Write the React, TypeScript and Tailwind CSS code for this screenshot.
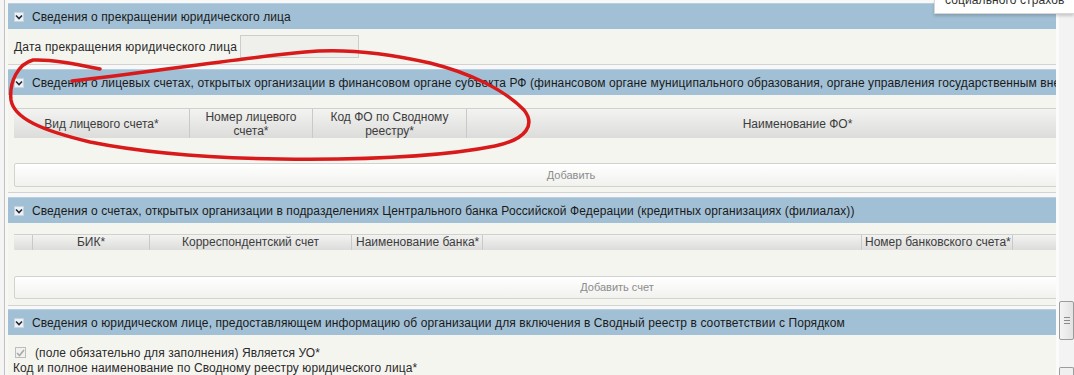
import React from "react";

const Chev = () => (
  <span className="w-[10px] h-[10px] bg-[#eef2f6] border border-[#c7d3de] flex items-center justify-center shrink-0">
    <svg width="8" height="6" viewBox="0 0 8 6">
      <path d="M1 1.5 L4 4.5 L7 1.5" fill="none" stroke="#1e2a36" strokeWidth="1.6" />
    </svg>
  </span>
);

const Header = ({ text }: { text: string }) => (
  <div className="h-[26px] bg-[#a2c0d5] flex items-center pl-[6px] whitespace-nowrap overflow-hidden text-[#1a1a1a] border-t border-[#b8cfdf]">
    <Chev />
    <span className="ml-[8px]">{text}</span>
  </div>
);

const Btn = ({ text, w }: { text: string; w: string }) => (
  <div
    className={`${w} ml-[6px] border border-[#d2d2d2] rounded-[2px] bg-gradient-to-b from-white to-[#f1f1ee] flex items-center justify-center text-[#8c8c8c] text-[11px] tracking-normal`}
  >
    {text}
  </div>
);

export default function App() {
  return (
    <div className="relative w-[1074px] h-[375px] overflow-hidden bg-[#f8f8f8] font-['Liberation_Sans',Arial,sans-serif] text-[12px] tracking-[0.1px]">
      <div className="flex h-full">
        <div className="w-[4px] bg-[#f4f4f4]" />
        <div className="w-px bg-[#c2c2c2]" />
        <div className="w-[3px] bg-[#f7f7f4]" />
        <div className="w-[1049px] overflow-hidden pt-[3px] flex flex-col">
          {/* Section 1 */}
          <Header text="Сведения о прекращении юридического лица" />
          <div className="h-[36px] bg-[#f5f5f0] border-b border-[#d3d3d3] flex items-center pl-[6px] text-[#2a2a2a] tracking-[0.2px]">
            <span>Дата прекращения юридического лица</span>
            <div className="ml-[3px] w-[119px] h-[23px] bg-[#efefec] border border-[#cdcdcd]" />
          </div>
          <div className="h-[4px]" />

          {/* Section 2 */}
          <Header text="Сведения о лицевых счетах, открытых организации в финансовом органе субъекта РФ (финансовом органе муниципального образования, органе управления государственным внебюджетным фондом)" />
          <div className="bg-[#f5f5f0] border-b border-[#d3d3d3] pt-[13px] pb-[5px]">
            <div className="ml-[6px] w-[1114px] h-[30px] flex bg-gradient-to-b from-[#f3f3f1] to-[#dcdcda] border-t border-[#d0d0d0] text-[#3c3c3c] leading-[14px] tracking-normal">
              <div className="w-[176px] border-r border-[#c9c9c9] flex items-center justify-center">Вид лицевого счета*</div>
              <div className="w-[123px] border-r border-[#c9c9c9] flex items-center justify-center text-center">Номер лицевого<br />счета*</div>
              <div className="w-[154px] border-r border-[#c9c9c9] flex items-center justify-center text-center">Код ФО по Сводному<br />реестру*</div>
              <div className="flex-1 flex items-center justify-center">Наименование ФО*</div>
            </div>
            <div className="h-[25px]" />
            <Btn text="Добавить" w="w-[1114px] h-[24px]" />
          </div>
          <div className="h-[4px]" />

          {/* Section 3 */}
          <Header text="Сведения о счетах, открытых организации в подразделениях Центрального банка Российской Федерации (кредитных организациях (филиалах))" />
          <div className="bg-[#f5f5f0] border-b border-[#d3d3d3] pt-[11px] pb-[6px]">
            <div className="ml-[6px] w-[1206px] h-[16px] flex bg-gradient-to-b from-[#f3f3f1] to-[#dcdcda] border-t border-[#d0d0d0] text-[#3c3c3c] leading-[15px] tracking-normal">
              <div className="w-[19px] border-r border-[#c9c9c9]" />
              <div className="w-[117px] border-r border-[#c9c9c9] text-center">БИК*</div>
              <div className="w-[202px] border-r border-[#c9c9c9] text-center">Корреспондентский счет</div>
              <div className="w-[131px] border-r border-[#c9c9c9] pl-[4px] whitespace-nowrap overflow-hidden">Наименование банка*</div>
              <div className="w-[379px] border-r border-[#c9c9c9]" />
              <div className="w-[151px] border-r border-[#c9c9c9] pl-[3px] whitespace-nowrap overflow-hidden">Номер банковского счета*</div>
              <div className="flex-1" />
            </div>
            <div className="h-[26px]" />
            <Btn text="Добавить счет" w="w-[1206px] h-[23px]" />
          </div>
          <div className="h-[3px]" />

          {/* Section 4 */}
          <Header text="Сведения о юридическом лице, предоставляющем информацию об организации для включения в Сводный реестр в соответствии с Порядком" />
          <div className="flex-1 bg-[#f5f5f0] pt-[10px] text-[#2a2a2a]">
            <div className="flex items-center h-[15px] pl-[7px]">
              <span className="w-[11px] h-[11px] border border-[#bdbdbd] bg-[#f1f1ef] flex items-center justify-center">
                <svg width="9" height="8" viewBox="0 0 9 8">
                  <path d="M1 4 L3.5 6.5 L8 1" fill="none" stroke="#a9a9a9" strokeWidth="1.6" />
                </svg>
              </span>
              <span className="ml-[9px]">(поле обязательно для заполнения) Является УО*</span>
            </div>
            <div className="h-[15px] flex items-center pl-[5px]">Код и полное наименование по Сводному реестру юридического лица*</div>
          </div>
        </div>
        {/* right strip with scrollbar */}
        <div className="flex-1 bg-[#f3f3f3] border-l-[3px] border-[#fbfbfb] flex flex-col items-center">
          <div className="h-[301px]" />
          <div className="w-[15px] h-[39px] border border-[#9c9c9c] rounded-[2px] bg-gradient-to-r from-[#f4f4f4] to-[#e2e2e2] flex flex-col items-center justify-center gap-[2px]">
            <div className="w-[6px] h-px bg-[#8a8a8a]" />
            <div className="w-[6px] h-px bg-[#8a8a8a]" />
            <div className="w-[6px] h-px bg-[#8a8a8a]" />
          </div>
          <div className="flex-1" />
          <div className="w-[15px] h-[8px] border border-b-0 border-[#9c9c9c] rounded-t-[2px] bg-[#f0f0f0]" />
        </div>
      </div>

      {/* popup at top right */}
      <div className="absolute right-0 top-0 w-[140px] h-[14px] bg-white border-l border-b border-[#d8d8d8] shadow-[0_2px_3px_rgba(0,0,0,0.18)] overflow-hidden">
        <div className="absolute left-[10px] top-[-9px] whitespace-nowrap text-[12px] text-[#333]">социального страхов</div>
      </div>

      {/* red hand-drawn annotation */}
      <svg className="absolute inset-0 pointer-events-none" width="1074" height="375" viewBox="0 0 1074 375">
        <path
          d="M 100 69 C 75 64, 50 59, 33 60 C 18 64, 9 82, 11 100 C 14 118, 40 130, 90 142 C 140 152, 200 158, 280 159 C 360 160, 440 157, 495 146 C 528 139, 535 124, 524 110 C 505 90, 470 73, 430 63 C 390 54, 345 48, 305 52 C 240 58, 150 72, 72 81"
          fill="none"
          stroke="#d81a1a"
          strokeWidth="3.5"
          strokeLinecap="round"
          strokeLinejoin="round"
        />
      </svg>
    </div>
  );
}
